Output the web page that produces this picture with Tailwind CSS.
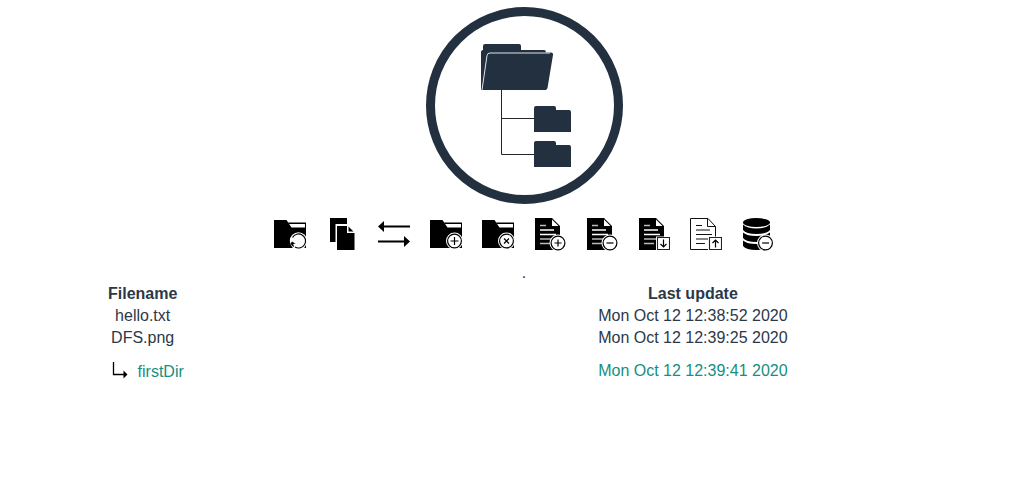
<!DOCTYPE html>
<html lang="en">
<head>
<meta charset="utf-8">
<meta name="viewport" content="width=device-width, initial-scale=1">
<title>DFS</title>
<script src="https://cdn.jsdelivr.net/npm/@tailwindcss/browser@4"></script>
</head>
<body class="bg-white text-[#2c3848] font-['Liberation_Sans',Arial,sans-serif] text-base">
<svg class="hidden">
  <defs>
    <g id="folder"><path d="M0 2h12.500l5 7.500H32V30H0z"/><path d="M14 4.500h18V6H15z"/><path d="M31 5h1v5h-1z"/></g>
    <g id="doc"><path d="M1 0h17l8 8v24H1z"/><path d="M18 1.500v6.500h6.500z" fill="#fff"/><path d="M6 12h14M6 16.500h16" stroke="#fff" stroke-width="1.300"/><path d="M6 7.500h6M6 21h14M6 25.500h10" stroke="#bbb" stroke-width="1.300"/></g>
    <g id="badge"><circle r="8.500" fill="#fff"/><circle r="6.900" fill="#fff" stroke="#000" stroke-width="1.200"/></g>
    <g id="box"><path d="M18 18.500h14V32H18z" fill="#fff"/><path d="M19.500 19.500h12v12h-12z" fill="#fff" stroke="#222" stroke-width="1.100"/></g>
  </defs>
</svg>
<main class="flex flex-col pt-[7px] pr-0.5">
  <header class="flex flex-col items-center pl-[29px]">
    <svg class="w-[197px] h-[197px]" viewBox="426 7 197 197" role="img" aria-label="Distributed file system">
      <circle cx="524.500" cy="105.500" r="94" fill="none" stroke="#233040" stroke-width="9"/>
      <g fill="#233040">
        <path d="M481 90V52q0-2 2-2v-4q0-2 2-2h34q2 0 2 2v4h23q2 0 2 3v37z" />
        <path d="M546 52h9v39h-9z" fill="#fff"/>
        <path d="M482 90l5-35q.400-2.500 3-2.500h61q2.500 0 2 2.500l-5.500 33q-.500 2-2.500 2z"/>
        <path d="M482 90l5-34.500q.400-2.500 3-2.500h60" fill="none" stroke="#dce5ea"/>
        <path d="M534 132v-24q0-2 2-2h18q2 0 2 2v2h13q2 0 2 2v20zM534 167v-24q0-2 2-2h18q2 0 2 2v2h13q2 0 2 2v20z"/>
      </g>
      <path d="M501.500 90v64.500H534M501.500 118.500H534" fill="none" stroke="#20262c"/>
    </svg>
    <nav class="flex gap-5 mt-3.5" aria-label="File actions">
      <button class="size-8" aria-label="Refresh folder"><svg class="size-8 overflow-visible" viewBox="0 0 32 32"><use href="#folder"/><circle cx="24.500" cy="23" r="8.700" fill="#fff"/><path d="M18.500 19.500a7 7 0 1 1 2.500 9.500M17.800 25.500q.700 2 2 3" fill="none" stroke="#000" stroke-width="1.200"/><path d="M16.500 25.800l1.500-2.300 3.500 2.300-2 .200-1 1.500z"/></svg></button>
      <button class="size-8" aria-label="Copy"><svg class="size-8" viewBox="0 0 32 32"><path d="M4 0h17v6H9.500v18H4zM11 8h10v7h7.500v17H11zM22.500 8.500l5 5h-5z"/></svg></button>
      <button class="size-8" aria-label="Move"><svg class="size-8" viewBox="0 0 32 32"><path d="M0 8.500L6 3v4.500h26v2H6V14zM32 23.500L26 18v4.500H0v2h26V29z"/></svg></button>
      <button class="size-8" aria-label="Add folder"><svg class="size-8 overflow-visible" viewBox="0 0 32 32"><use href="#folder"/><use href="#badge" x="24.500" y="23"/><path d="M20.500 23h8M24.500 19v8" stroke="#000" stroke-width="1.200"/></svg></button>
      <button class="size-8" aria-label="Delete folder"><svg class="size-8 overflow-visible" viewBox="0 0 32 32"><use href="#folder"/><use href="#badge" x="24.500" y="23"/><path d="M22 20.500l5 5m0-5l-5 5" stroke="#000" stroke-width="1.200"/></svg></button>
      <button class="size-8" aria-label="Add file"><svg class="size-8 overflow-visible" viewBox="0 0 32 32"><use href="#doc"/><use href="#badge" x="24" y="25"/><path d="M20.500 25h7M24 21.500v7" stroke="#000" stroke-width="1.200"/></svg></button>
      <button class="size-8" aria-label="Delete file"><svg class="size-8 overflow-visible" viewBox="0 0 32 32"><use href="#doc"/><use href="#badge" x="24" y="25"/><path d="M20.500 25h7" stroke="#000" stroke-width="1.200"/></svg></button>
      <button class="size-8" aria-label="Download file"><svg class="size-8" viewBox="0 0 32 32"><use href="#doc"/><use href="#box"/><path d="M25.500 21.500v7.500M22.500 26l3 3 3-3" fill="none" stroke="#000" stroke-width="1.200"/></svg></button>
      <button class="size-8" aria-label="Upload file"><svg class="size-8" viewBox="0 0 32 32"><path d="M.500.500h17.500l7.500 8V31.500H.500zM17.500.500v8h8" fill="none" stroke="#111"/><path d="M6 7.500h6M6 12h14M6 16.500h16M6 21h12M6 25.500h9" stroke="#111" stroke-width="1.200"/><use href="#box"/><path d="M25.500 29.500v-7.500M22.500 25l3-3 3 3" fill="none" stroke="#000" stroke-width="1.200"/></svg></button>
      <button class="size-8" aria-label="Delete storage"><svg class="size-8 overflow-visible" viewBox="0 0 32 32"><ellipse cx="14.500" cy="4.500" rx="13.500" ry="4.500"/><path d="M1 6.500q4 4 13.500 4t13.500-4V12q-3 4-13.500 4T1 12zM1 14.500q4 3.500 13.500 3.500t13.500-3.500V20q-3 4-13.500 4T1 20zM1 22.500q4 3.500 13.500 3.500t13.500-3.500V28q-3 4-13.500 4T1 28z"/><use href="#badge" x="23.500" y="25"/><path d="M20 25h7" stroke="#000" stroke-width="1.200"/></svg></button>
    </nav>
    <p class="mt-[13px] leading-5">.</p>
  </header>
  <table class="w-full table-fixed text-center leading-[22px]">
    <colgroup><col class="w-[28%]"><col class="w-[8%]"><col class="w-[64%]"></colgroup>
    <thead><tr><th scope="col">Filename</th><td></td><th scope="col">Last update</th></tr></thead>
    <tbody>
      <tr><td>hello.txt</td><td></td><td>Mon Oct 12 12:38:52 2020</td></tr>
      <tr><td>DFS.png</td><td></td><td>Mon Oct 12 12:39:25 2020</td></tr>
      <tr class="align-top text-[#148f83]">
        <td class="pt-3"><a href="#firstDir" class="inline-flex items-center gap-2 pl-2"><svg class="w-5 h-5" viewBox="0 0 20 20"><path d="M3.500 0v12.500H14" fill="none" stroke="#000" stroke-width="1.300"/><path d="M13.500 8.500l4 4-4 4z"/></svg>firstDir</a></td>
        <td></td>
        <td class="pt-[11px]">Mon Oct 12 12:39:41 2020</td>
      </tr>
    </tbody>
  </table>
</main>
</body>
</html>
